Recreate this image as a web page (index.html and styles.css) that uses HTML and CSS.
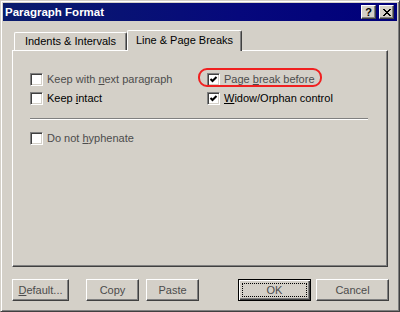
FILE: index.html
```html
<!DOCTYPE html>
<html lang="en">
<head>
    <meta charset="UTF-8">
    <title>Paragraph Format</title>
    <link rel="stylesheet" href="styles.css">
</head>
<body>
    <div class="window">
        <div class="titlebar">
            <span class="title">Paragraph Format</span>
            <div class="caption-buttons">
                <button class="cap-btn">?</button>
                <button class="cap-btn close">
                    <svg width="8" height="7" viewBox="0 0 8 7" shape-rendering="crispEdges">
                        <path d="M0 0h2v1h-2zM6 0h2v1h-2zM1 1h2v1h-2zM5 1h2v1h-2zM2 2h4v1h-4zM3 3h2v1h-2zM2 4h4v1h-4zM1 5h2v1h-2zM5 5h2v1h-2zM0 6h2v1h-2zM6 6h2v1h-2z" fill="#000"/>
                    </svg>
                </button>
            </div>
        </div>

        <div class="dialog">
            <div class="tabs">
                <div class="tab">Indents &amp; Intervals</div>
                <div class="tab active">Line &amp; Page Breaks</div>
            </div>

            <div class="panel">
                <div class="options">
                    <label class="check muted">
                        <span class="box"></span>
                        <span>Keep with <u>n</u>ext paragraph</span>
                    </label>
                    <label class="check muted marked">
                        <span class="box">
                            <svg width="9" height="9" viewBox="0 0 9 9"><polyline points="1.5,4 3.5,6 7.5,2" fill="none" stroke="#000" stroke-width="2"/></svg>
                        </span>
                        <span>Page <u>b</u>reak before</span>
                    </label>
                    <label class="check">
                        <span class="box"></span>
                        <span>Keep <u>i</u>ntact</span>
                    </label>
                    <label class="check">
                        <span class="box">
                            <svg width="9" height="9" viewBox="0 0 9 9"><polyline points="1.5,4 3.5,6 7.5,2" fill="none" stroke="#000" stroke-width="2"/></svg>
                        </span>
                        <span><u>W</u>idow/Orphan control</span>
                    </label>
                </div>

                <div class="separator"></div>

                <label class="check muted">
                    <span class="box"></span>
                    <span>Do not <u>h</u>yphenate</span>
                </label>
            </div>

            <div class="buttons">
                <button class="btn btn-default-set"><u>D</u>efault...</button>
                <button class="btn btn-copy">Copy</button>
                <button class="btn btn-paste">Paste</button>
                <button class="btn btn-ok">OK</button>
                <button class="btn btn-cancel">Cancel</button>
            </div>
        </div>
    </div>
</body>
</html>
```

FILE: styles.css
```css
body {
    margin: 0;
    padding: 0;
    background: #d4d0c8;
}
.window {
    width: 400px;
    height: 312px;
    box-sizing: border-box;
    padding: 2px;
    background: #d4d0c8;
    border: 1px solid;
    border-color: #d4d0c8 #404040 #404040 #d4d0c8;
    box-shadow: inset 1px 1px #fff, inset -1px -1px #808080;
    font-family: "Liberation Sans", Arial, sans-serif;
    font-size: 11px;
    color: #000;
}
.titlebar {
    height: 18px;
    display: flex;
    align-items: center;
    justify-content: space-between;
    padding: 0 3px 0 2px;
    background: linear-gradient(90deg, #0a1c6c, #06087c 60%, #00007a);
}
.title {
    color: #fff;
    font-weight: bold;
    font-size: 11.5px;
}
.caption-buttons {
    display: flex;
    gap: 3px;
}
.cap-btn {
    width: 15px;
    height: 14px;
    box-sizing: border-box;
    padding: 0;
    display: flex;
    align-items: center;
    justify-content: center;
    background: #d4d0c8;
    border: 1px solid;
    border-color: #fff #404040 #404040 #fff;
    box-shadow: inset -1px -1px #808080;
    font-family: "Liberation Sans", Arial, sans-serif;
    font-weight: bold;
    font-size: 11px;
    color: #000;
}
.dialog {
    padding: 9px 8px 0 9px;
}
.tabs {
    display: flex;
    align-items: flex-end;
    height: 20px;
}
.tab {
    width: 113px;
    height: 18px;
    box-sizing: border-box;
    margin-left: 2px;
    display: flex;
    align-items: center;
    justify-content: center;
    border-top: 1px solid #fff;
    border-left: 1px solid #fff;
    border-right: 1px solid #404040;
    border-radius: 2px 2px 0 0;
    box-shadow: inset -1px 0 #808080;
    line-height: 13px;
    color: #000;
}
.tab.active {
    position: relative;
    z-index: 1;
    width: 115px;
    height: 21px;
    margin-left: 0;
    margin-bottom: -1px;
    padding-bottom: 2px;
    background: #d4d0c8;
}
.panel {
    width: 376px;
    height: 217px;
    box-sizing: border-box;
    padding: 22px 0 0 17px;
    border: 1px solid;
    border-color: #fff #404040 #404040 #fff;
    box-shadow: inset -1px -1px #808080;
}
.options {
    display: grid;
    grid-template-columns: 177px 1fr;
    row-gap: 6px;
}
.check {
    display: flex;
    align-items: center;
    gap: 4px;
    height: 13px;
    line-height: 13px;
    color: #000;
}
.check.muted {
    color: #4c4c4c;
}
.check.marked {
    position: relative;
}
.check.marked::after {
    content: "";
    position: absolute;
    left: -9px;
    top: -5px;
    width: 124px;
    height: 19px;
    box-sizing: border-box;
    border: 2px solid #f02020;
    border-radius: 9px;
}
.box {
    width: 13px;
    height: 13px;
    box-sizing: border-box;
    flex-shrink: 0;
    display: flex;
    align-items: center;
    justify-content: center;
    background: #fff;
    border: 1px solid;
    border-color: #808080 #fff #fff #808080;
    box-shadow: inset 1px 1px #404040, inset -1px -1px #d4d0c8;
}
.separator {
    width: 338px;
    margin: 13px 0 12px;
    border-top: 1px solid #808080;
    border-bottom: 1px solid #fff;
}
.buttons {
    display: flex;
    margin-top: 12px;
}
.btn {
    height: 22px;
    box-sizing: border-box;
    padding: 0;
    background: #d4d0c8;
    border: 1px solid;
    border-color: #fff #404040 #404040 #fff;
    box-shadow: inset -1px -1px #808080;
    font-family: "Liberation Sans", Arial, sans-serif;
    font-size: 11px;
    color: #4c4c4c;
}
.btn-default-set {
    width: 57px;
}
.btn-copy {
    width: 53px;
    margin-left: 17px;
}
.btn-paste {
    width: 53px;
    margin-left: 7px;
}
.btn-ok {
    width: 73px;
    margin-left: auto;
    border-color: #000;
    box-shadow: inset 1px 1px #fff, inset -1px -1px #404040, inset -2px -2px #808080;
    outline: 1px dotted #000;
    outline-offset: -5px;
}
.btn-cancel {
    width: 73px;
    margin-left: 5px;
}
```
